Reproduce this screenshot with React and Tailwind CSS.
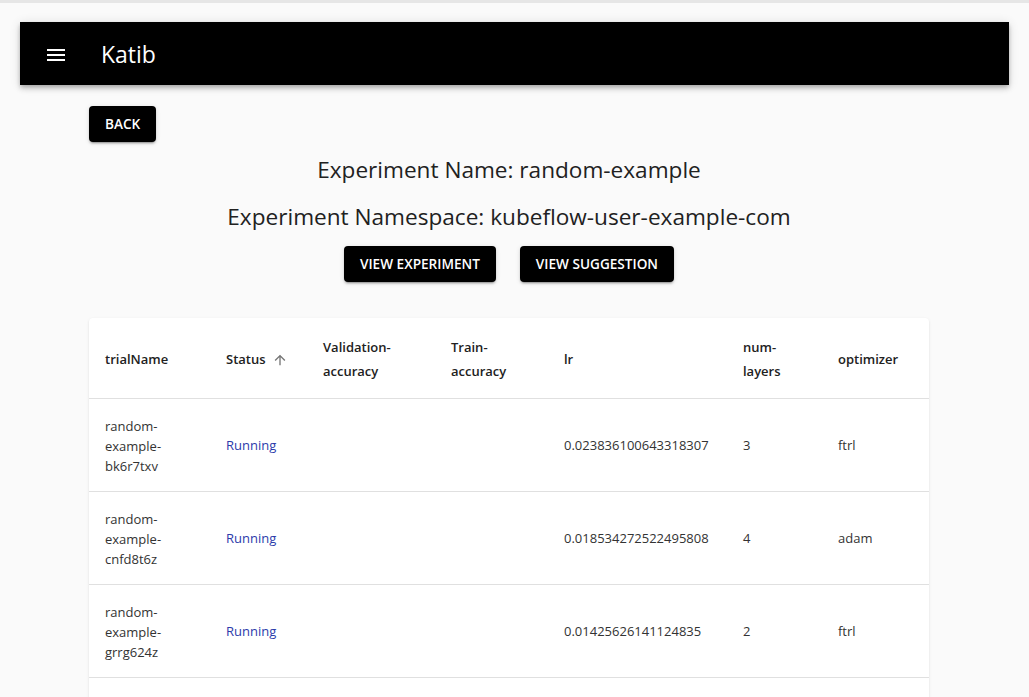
import { Fragment } from 'react';

const rows = [
  { name: ['random-', 'example-', 'bk6r7txv'], status: 'Running', lr: '0.023836100643318307', layers: '3', opt: 'ftrl' },
  { name: ['random-', 'example-', 'cnfd8t6z'], status: 'Running', lr: '0.018534272522495808', layers: '4', opt: 'adam' },
  { name: ['random-', 'example-', 'grrg624z'], status: 'Running', lr: '0.01425626141124835', layers: '2', opt: 'ftrl' },
];

const cols = ['w-[121px]', 'w-[97px]', 'w-[128px]', 'w-[113px]', 'w-[179px]', 'w-[95px]', 'w-[107px]'];

function MenuIcon() {
  return (
    <svg width="24" height="24" viewBox="0 0 24 24" fill="currentColor">
      <path d="M3 18h18v-2H3v2zm0-5h18v-2H3v2zm0-7v2h18V6H3z" />
    </svg>
  );
}

function ArrowUp() {
  return (
    <svg width="16" height="16" viewBox="0 0 24 24" fill="currentColor">
      <path d="M4 12l1.41 1.41L11 7.83V20h2V7.83l5.58 5.59L20 12l-8-8-8 8z" />
    </svg>
  );
}

function Btn({ children, className = '' }) {
  return (
    <button className={`h-9 rounded bg-black px-4 text-[13.6px] font-semibold uppercase text-white shadow-[0_3px_1px_-2px_rgba(0,0,0,0.2),0_2px_2px_0_rgba(0,0,0,0.14),0_1px_5px_0_rgba(0,0,0,0.12)] ${className}`}>
      {children}
    </button>
  );
}

export default function App() {
  return (
    <div className="min-h-[697px] border-t-[3px] border-[#e6e6e6] bg-[#fafafa] font-['Open_Sans',sans-serif] text-[#212121]">
      <div className="px-5 pt-[19px]">
        <header className="flex h-[63px] items-center bg-black px-6 pt-[2px] text-white shadow-[0_2px_4px_-1px_rgba(0,0,0,0.2),0_4px_5px_0_rgba(0,0,0,0.14),0_1px_10px_0_rgba(0,0,0,0.12)]">
          <span className="text-white"><MenuIcon /></span>
          <span className="ml-[33px] text-[23px] font-normal">Katib</span>
        </header>
      </div>

      <div className="ml-[89px] w-[840px] pt-[21px]">
        <Btn>Back</Btn>

        <div className="mt-[11px] flex flex-col items-center">
          <h2 className="text-[22.6px] leading-[34px] font-normal">Experiment Name: random-example</h2>
          <h2 className="mt-[13px] text-[22.6px] leading-[34px] font-normal">Experiment Namespace: kubeflow-user-example-com</h2>
          <div className="mt-[12px] flex gap-6">
            <Btn>View Experiment</Btn>
            <Btn>View Suggestion</Btn>
          </div>
        </div>

        <div className="mt-9 w-[840px] overflow-hidden rounded bg-white shadow-[0_1px_3px_0_rgba(0,0,0,0.1),0_1px_1px_0_rgba(0,0,0,0.06)]">
          <table className="w-[840px] table-fixed border-collapse text-left text-[13px]">
            <colgroup>
              {cols.map((c, i) => <col key={i} className={c} />)}
            </colgroup>
            <thead>
              <tr className="h-[80px] border-b border-[#e0e0e0] text-[#212121]">
                <th className="px-4 pt-[4px] font-semibold">trialName</th>
                <th className="px-4 pt-[4px] font-semibold">
                  <span className="flex items-center gap-[6px]">Status<span className="text-[#757575]"><ArrowUp /></span></span>
                </th>
                <th className="px-4 pt-[2px] font-semibold leading-6">Validation-<br />accuracy</th>
                <th className="px-4 pt-[2px] font-semibold leading-6">Train-<br />accuracy</th>
                <th className="px-4 pt-[4px] font-semibold">lr</th>
                <th className="px-4 pt-[2px] font-semibold leading-6">num-<br />layers</th>
                <th className="px-4 pt-[4px] font-semibold">optimizer</th>
              </tr>
            </thead>
            <tbody>
              {rows.map((r, i) => (
                <tr key={i} className="h-[93px] border-b border-[#e0e0e0] text-[#333]">
                  <td className="px-4 pt-[3px] leading-5">
                    {r.name.map((n, j) => (
                      <Fragment key={j}>{n}{j < r.name.length - 1 && <br />}</Fragment>
                    ))}
                  </td>
                  <td className="px-4 pt-[3px] text-[#2c3bab]">{r.status}</td>
                  <td className="px-4"></td>
                  <td className="px-4"></td>
                  <td className="px-4 pt-[3px]">{r.lr}</td>
                  <td className="px-4 pt-[3px]">{r.layers}</td>
                  <td className="px-4 pt-[3px]">{r.opt}</td>
                </tr>
              ))}
              <tr className="h-[93px]"><td colSpan={7}></td></tr>
            </tbody>
          </table>
        </div>
      </div>
    </div>
  );
}
